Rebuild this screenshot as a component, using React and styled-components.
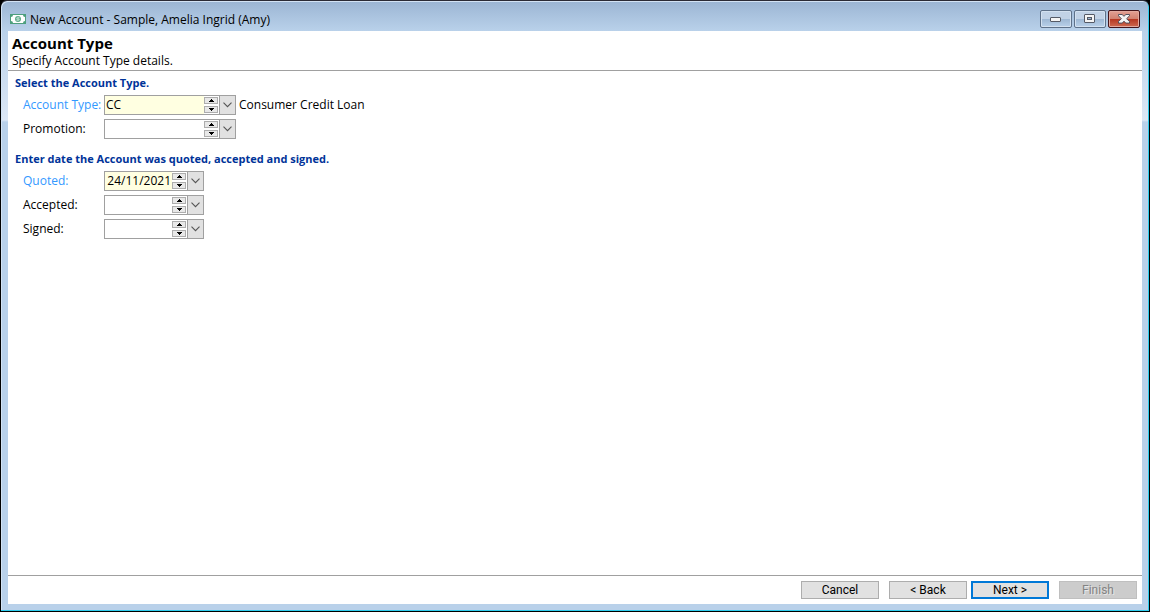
import React from "react";
import styled, { createGlobalStyle, css } from "styled-components";

const COLORS = {
  frame: "#b9d1ea",
  line: "#a0a0a0",
  heading: "#003399",
  required: "#3399ff",
  requiredBg: "#ffffe1",
};

const GlobalStyle = createGlobalStyle`
  * {
    box-sizing: border-box;
  }
  body {
    margin: 0;
    background: #000;
    color: #000;
    font-family: "Open Sans", "Noto Sans", sans-serif;
    font-size: 12px;
    line-height: 16px;
  }
  button, input {
    margin: 0;
    padding: 0;
    font: inherit;
    color: inherit;
  }
`;

const Window = styled.div`
  display: flex;
  flex-direction: column;
  min-height: 100vh;
  padding: 0 7px 7px;
  border: 1px solid #000;
  border-top-color: #2b2b35;
  border-radius: 7px 7px 0 0;
  background:
    linear-gradient(#9bb5d3, #b9d1ea 30px, #dce7f5 119px, ${COLORS.frame} 121px);
  box-shadow: inset -1px -1px #2fcdee, inset 1px 1px #d3e3f4;
`;

const TitleBar = styled.header`
  display: flex;
  align-items: center;
  height: 30px;
  padding: 6px 2px 0;
`;

const WindowTitle = styled.span`
  flex: 1;
  padding: 1px 0 0 4px;
`;

const WindowButtons = styled.div`
  display: flex;
  gap: 2px;
`;

const WindowButton = styled.button`
  display: flex;
  align-items: center;
  justify-content: center;
  width: 32px;
  height: 18px;
  border: 1px solid #5e7189;
  border-radius: 2px;
  background: linear-gradient(#c1d2e6 50%, #9db7d3 50%, #b9d1ea);
  box-shadow: inset 0 0 0 1px #d3e1f0;

  ${({ $close }) =>
    $close &&
    css`
      border-color: #43141a;
      background: linear-gradient(#e3a094, #d0806f 50%, #b5351f 50%, #cf6a50);
      box-shadow: inset 0 0 0 1px #e2a99e;
    `}
`;

const Page = styled.main`
  flex: 1;
  display: flex;
  flex-direction: column;
  background: #fff;
`;

const PageHeader = styled.div`
  padding: 3px 4px 1px;
  border-bottom: 1px solid ${COLORS.line};

  h1 {
    margin: 0;
    font-size: 15px;
    font-weight: bold;
    line-height: 19px;
  }
  p {
    margin: 0;
  }
`;

const Form = styled.form`
  flex: 1;
  display: flex;
  flex-direction: column;
  gap: 10px;
  padding: 4px 7px;
`;

const Section = styled.section`
  h2 {
    margin: 0 0 2px;
    color: ${COLORS.heading};
    font-size: 11px;
    font-weight: bold;
    line-height: 16px;
  }
`;

const Row = styled.div`
  display: flex;
  align-items: center;
  height: 24px;
  padding-left: 8px;
`;

const Label = styled.label`
  width: 81px;
  white-space: nowrap;
  color: ${({ $required }) => ($required ? COLORS.required : "#000")};
`;

const FieldBox = styled.div`
  display: flex;
  width: ${({ $date }) => ($date ? "100px" : "132px")};
  height: 20px;
  border: 1px solid ${COLORS.line};
  background: ${({ $required }) => ($required ? COLORS.requiredBg : "#fff")};
`;

const TextInput = styled.input`
  flex: 1;
  min-width: 0;
  padding: 0 1px;
  border: 0;
  outline: 0;
  background: transparent;
  text-align: ${({ $date }) => ($date ? "right" : "left")};
`;

const Spinner = styled.div`
  display: flex;
  flex-direction: column;
  gap: 2px;
  padding: 1px 1px 1px 0;
  background: #fff;
`;

const SpinButton = styled.button`
  display: flex;
  align-items: center;
  justify-content: center;
  width: 14px;
  height: 7px;
  border: 1px solid #adadad;
  background: #e8e8e8;
`;

const DropButton = styled.button`
  display: flex;
  align-items: center;
  justify-content: center;
  width: 16px;
  border: 0;
  border-left: 1px solid ${COLORS.line};
  background: #e1e1e1;
`;

const Description = styled.span`
  padding-left: 3px;
`;

const Footer = styled.footer`
  display: flex;
  justify-content: flex-end;
  gap: 10px;
  padding: 5px;
  border-top: 1px solid ${COLORS.line};
`;

const ButtonPair = styled.div`
  display: flex;
  gap: 4px;
`;

const Button = styled.button`
  width: 78px;
  height: 18px;
  border: ${({ $primary }) =>
    $primary ? "2px solid #0078d7" : "1px solid #adadad"};
  background: #e1e1e1;
  font-family: Roboto, "Liberation Sans", sans-serif;
  line-height: 14px;

  &:disabled {
    border-color: #bfbfbf;
    background: #ccc;
    color: #838383;
    text-shadow: 1px 1px #e8e8e8;
  }
`;

const MoneyIcon = () => (
  <svg width="16" height="10" viewBox="0 0 16 10" aria-hidden="true">
    <rect width="16" height="10" fill="#4d9f7d" />
    <path d="M3 1h10a2 2 0 0 0 2 2v4a2 2 0 0 0-2 2H3a2 2 0 0 0-2-2V3a2 2 0 0 0 2-2z" fill="#fff" />
    <circle cx="8" cy="5" r="3" fill="#5fab8b" />
    <path d="M9.5 3.8H7.4a.6.6 0 0 0 0 1.2h1.2a.6.6 0 0 1 0 1.2H6.5" fill="none" stroke="#e6f4ee" strokeWidth="0.8" />
  </svg>
);

const MinimizeIcon = () => (
  <svg width="12" height="6" viewBox="0 0 12 6" aria-hidden="true">
    <rect x="0.5" y="1.5" width="10" height="4" rx="0.5" fill="#f4f4f4" stroke="#555a66" />
  </svg>
);

const MaximizeIcon = () => (
  <svg width="12" height="10" viewBox="0 0 12 10" aria-hidden="true">
    <rect x="0.5" y="0.5" width="10" height="8" rx="0.5" fill="#f4f4f4" stroke="#555a66" />
    <rect x="3.5" y="3.5" width="4" height="2" fill="#9db7d3" stroke="#555a66" />
  </svg>
);

const CloseIcon = () => (
  <svg width="12" height="10" viewBox="0 0 12 10" aria-hidden="true">
    <path
      d="M.5.5h3.6L6 2.3 7.9.5h3.6v1.3L8.6 4.7l2.9 2.9v1.5H7.9L6 7.3 4.1 9.1H.5V7.6l2.9-2.9L.5 1.8z"
      fill="#f4f4f4"
      stroke="#51505c"
    />
  </svg>
);

const Triangle = ({ down }) => (
  <svg width="5" height="3" viewBox="0 0 5 3" shapeRendering="crispEdges" aria-hidden="true">
    <path d={down ? "M0 0h5v1h-1v1h-1v1h-1v-1h-1v-1h-1z" : "M0 3h5v-1h-1v-1h-1v-1h-1v1h-1v1h-1z"} />
  </svg>
);

const Chevron = () => (
  <svg width="9" height="6" viewBox="0 0 9 6" aria-hidden="true">
    <path d="M.5.7l4 4 4-4" fill="none" stroke="#555" strokeWidth="1.1" />
  </svg>
);

const Field = ({ id, label, value = "", required, date, description }) => (
  <Row>
    <Label htmlFor={id} $required={required}>
      {label}
    </Label>
    <FieldBox $date={date} $required={required}>
      <TextInput id={id} type="text" defaultValue={value} $date={date} />
      <Spinner>
        <SpinButton type="button" aria-label={`${label} up`}>
          <Triangle />
        </SpinButton>
        <SpinButton type="button" aria-label={`${label} down`}>
          <Triangle down />
        </SpinButton>
      </Spinner>
      <DropButton type="button" aria-label={`${label} list`}>
        <Chevron />
      </DropButton>
    </FieldBox>
    {description && <Description>{description}</Description>}
  </Row>
);

const App = () => (
  <>
    <GlobalStyle />
    <Window>
      <TitleBar>
        <MoneyIcon />
        <WindowTitle>New Account - Sample, Amelia Ingrid (Amy)</WindowTitle>
        <WindowButtons>
          <WindowButton type="button" aria-label="Minimize">
            <MinimizeIcon />
          </WindowButton>
          <WindowButton type="button" aria-label="Maximize">
            <MaximizeIcon />
          </WindowButton>
          <WindowButton type="button" aria-label="Close" $close>
            <CloseIcon />
          </WindowButton>
        </WindowButtons>
      </TitleBar>
      <Page>
        <PageHeader>
          <h1>Account Type</h1>
          <p>Specify Account Type details.</p>
        </PageHeader>
        <Form>
          <Section>
            <h2>Select the Account Type.</h2>
            <Field
              id="account-type"
              label="Account Type:"
              value="CC"
              description="Consumer Credit Loan"
              required
            />
            <Field id="promotion" label="Promotion:" />
          </Section>
          <Section>
            <h2>Enter date the Account was quoted, accepted and signed.</h2>
            <Field id="quoted" label="Quoted:" value="24/11/2021" required date />
            <Field id="accepted" label="Accepted:" date />
            <Field id="signed" label="Signed:" date />
          </Section>
        </Form>
        <Footer>
          <Button type="button">Cancel</Button>
          <ButtonPair>
            <Button type="button">&lt; Back</Button>
            <Button type="button" $primary>
              Next &gt;
            </Button>
          </ButtonPair>
          <Button type="button" disabled>
            Finish
          </Button>
        </Footer>
      </Page>
    </Window>
  </>
);

export default App;
